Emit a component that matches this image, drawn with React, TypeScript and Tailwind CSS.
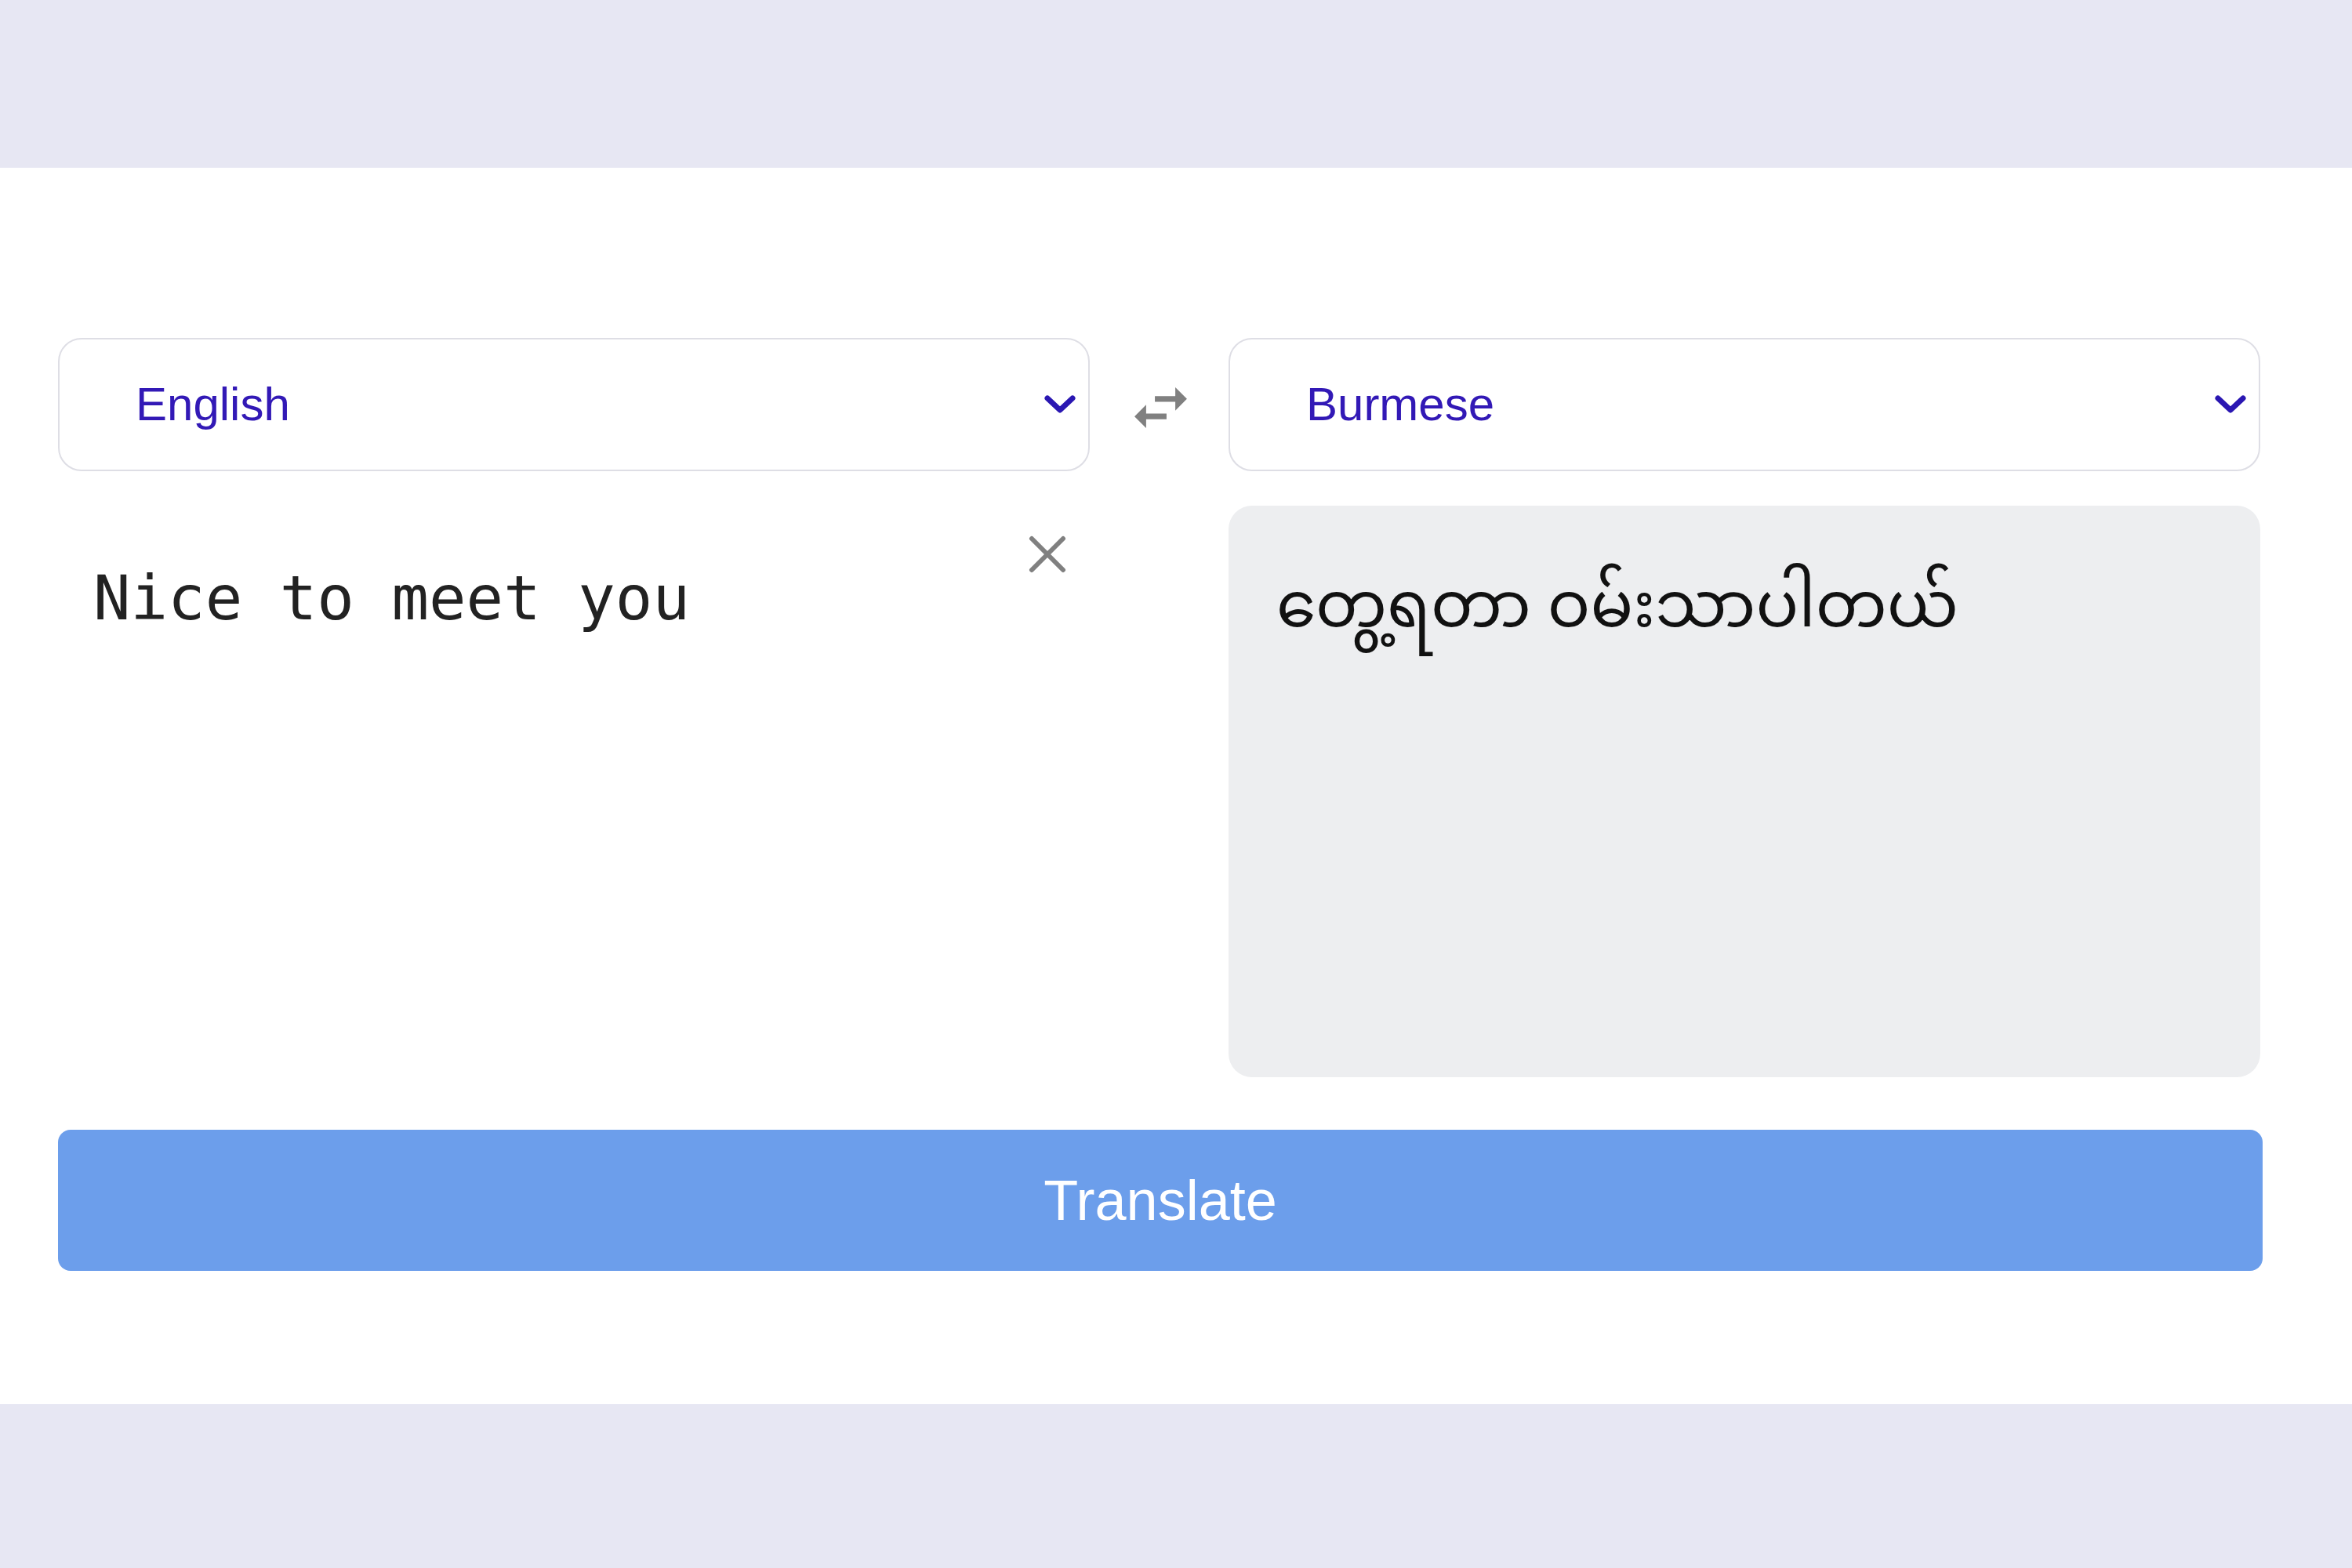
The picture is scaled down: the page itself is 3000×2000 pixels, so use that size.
const selectText = "font-['Liberation_Sans',Arial,sans-serif] text-[60px] text-[#3219b6]"

function Chevron() {
  return (
    <svg width="40" height="24" viewBox="0 0 40 24" fill="none">
      <path d="M4 4 L20 19 L36 4" stroke="#2a17b2" strokeWidth="7" strokeLinecap="round" strokeLinejoin="round" />
    </svg>
  )
}

function LangSelect({ label }: { label: string }) {
  return (
    <div className="flex h-[170px] items-center justify-between rounded-[30px] border-2 border-[#dedee5] bg-white pl-[97px] pr-[16px]">
      <span className={selectText}>{label}</span>
      <Chevron />
    </div>
  )
}

export default function App() {
  return (
    <div className="h-[2000px] bg-[#e7e7f3] pt-[214px]">
      <div className="h-[1577px] bg-white pt-[217px] pl-[74px]">
        <div className="grid w-[2809px] grid-cols-[1316px_177px_1316px]">
          <LangSelect label="English" />
          <div className="flex items-center justify-center pl-[4px] pt-[8px]">
            <svg width="67" height="52" viewBox="3 5 18 14" fill="#808080">
              <path d="M6.99 11L3 15l3.99 4v-3H14v-2H6.99v-3zM21 9l-3.99-4v3H10v2h7.01v3L21 9z" />
            </svg>
          </div>
          <LangSelect label="Burmese" />

          <div className="relative mt-[44px] h-[729px]">
            <textarea
              readOnly
              defaultValue="Nice to meet you"
              className="h-full w-full resize-none bg-transparent pl-[45px] pr-[90px] pt-[59px] font-['DejaVu_Sans_Mono',monospace] text-[79px] leading-normal text-[#222] outline-none"
            />
            <button className="absolute right-[30px] top-[38px] flex h-[48px] w-[48px] items-center justify-center">
              <svg width="48" height="48" viewBox="0 0 48 48" fill="none">
                <path d="M4 4 L44 44 M44 4 L4 44" stroke="#808080" strokeWidth="6" strokeLinecap="round" />
              </svg>
            </button>
          </div>
          <div />
          <div className="mt-[44px] h-[729px] rounded-[30px] bg-[#edeef0] pl-[61px] pt-[75px] font-['Noto_Sans_Myanmar','Padauk','Myanmar_Text','Noto_Sans',sans-serif] text-[81px] leading-normal text-[#111]">
            တွေ့ရတာ ဝမ်းသာပါတယ်
          </div>
        </div>

        <button className="mt-[67px] flex h-[180px] w-[2812px] items-center justify-center rounded-[16px] bg-[#6c9eeb] font-['Liberation_Sans',Arial,sans-serif] text-[72px] text-white">
          Translate
        </button>
      </div>
    </div>
  )
}
